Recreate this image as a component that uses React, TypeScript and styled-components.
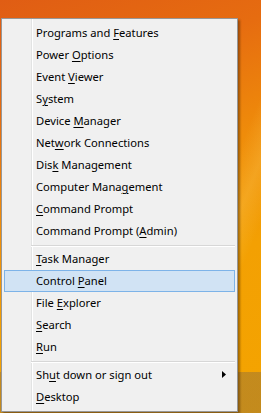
import React from "react";
import styled, { createGlobalStyle } from "styled-components";

const GlobalStyle = createGlobalStyle`
    html, body {
        margin: 0;
        padding: 0;
    }
    body {
        width: 261px;
        height: 413px;
        overflow: hidden;
        font-family: "Noto Sans", "Open Sans", sans-serif;
    }
`;

const Desktop = styled.div`
    width: 261px;
    height: 413px;
    padding: 18px 0 0 1px;
    box-sizing: border-box;
    background:
        linear-gradient(to bottom, transparent 372px, rgba(110, 95, 80, 0.36) 372px),
        linear-gradient(112deg, transparent 70%, rgba(255, 220, 120, 0.22) 76%, transparent 82%),
        linear-gradient(160deg, #e05d14 0%, #e66c10 22%, #ef8c0a 44%, #f3a003 66%, #f4a400 100%);
`;

const Menu = styled.div`
    width: 237px;
    box-sizing: border-box;
    padding: 3px 0;
    border: 1px solid #979797;
    box-shadow: 2px 2px 2px rgba(60, 30, 0, 0.45);
    background: linear-gradient(
        to right,
        #f0f0f0 29px,
        #e2e3e3 29px,
        #e2e3e3 30px,
        #ffffff 30px,
        #ffffff 31px,
        #f0f0f0 31px
    );
`;

const Item = styled.div<{ $active?: boolean }>`
    display: flex;
    align-items: center;
    justify-content: space-between;
    height: 22px;
    margin: 0 2px;
    padding: 0 8px 1px 31px;
    box-sizing: border-box;
    border: 1px solid ${(p) => (p.$active ? "#7db3e8" : "transparent")};
    background: ${(p) => (p.$active ? "#d1e3f4" : "transparent")};
    font-size: 11.2px;
    color: #000;
    white-space: nowrap;

    u {
        text-decoration: underline;
        text-underline-offset: 2px;
    }
`;

const Separator = styled.div`
    height: 6px;
    display: flex;
    align-items: center;
    margin: 0 2px 0 29px;

    &::after {
        content: "";
        flex: 1;
        height: 1px;
        background: #d7d7d7;
        box-shadow: 0 1px 0 #fff;
    }
`;

const Arrow = () => (
    <svg width="4" height="7" viewBox="0 0 4 7">
        <polygon points="0,0 4,3.5 0,7" fill="#000" />
    </svg>
);

type Entry = { pre: string; key: string; post: string; active?: boolean; sub?: boolean } | "sep";

const entries: Entry[] = [
    { pre: "Programs and ", key: "F", post: "eatures" },
    { pre: "Power ", key: "O", post: "ptions" },
    { pre: "Event ", key: "V", post: "iewer" },
    { pre: "S", key: "y", post: "stem" },
    { pre: "Device ", key: "M", post: "anager" },
    { pre: "Net", key: "w", post: "ork Connections" },
    { pre: "Dis", key: "k", post: " Management" },
    { pre: "Computer Mana", key: "g", post: "ement" },
    { pre: "", key: "C", post: "ommand Prompt" },
    { pre: "Command Prompt (", key: "A", post: "dmin)" },
    "sep",
    { pre: "", key: "T", post: "ask Manager" },
    { pre: "Control ", key: "P", post: "anel", active: true },
    { pre: "File ", key: "E", post: "xplorer" },
    { pre: "", key: "S", post: "earch" },
    { pre: "", key: "R", post: "un" },
    "sep",
    { pre: "Sh", key: "u", post: "t down or sign out", sub: true },
    { pre: "", key: "D", post: "esktop" },
];

export default function App() {
    return (
        <>
            <GlobalStyle />
            <Desktop>
                <Menu>
                    {entries.map((e, i) =>
                        e === "sep" ? (
                            <Separator key={i} />
                        ) : (
                            <Item key={i} $active={e.active}>
                                <span>
                                    {e.pre}
                                    <u>{e.key}</u>
                                    {e.post}
                                </span>
                                {e.sub && <Arrow />}
                            </Item>
                        )
                    )}
                </Menu>
            </Desktop>
        </>
    );
}
